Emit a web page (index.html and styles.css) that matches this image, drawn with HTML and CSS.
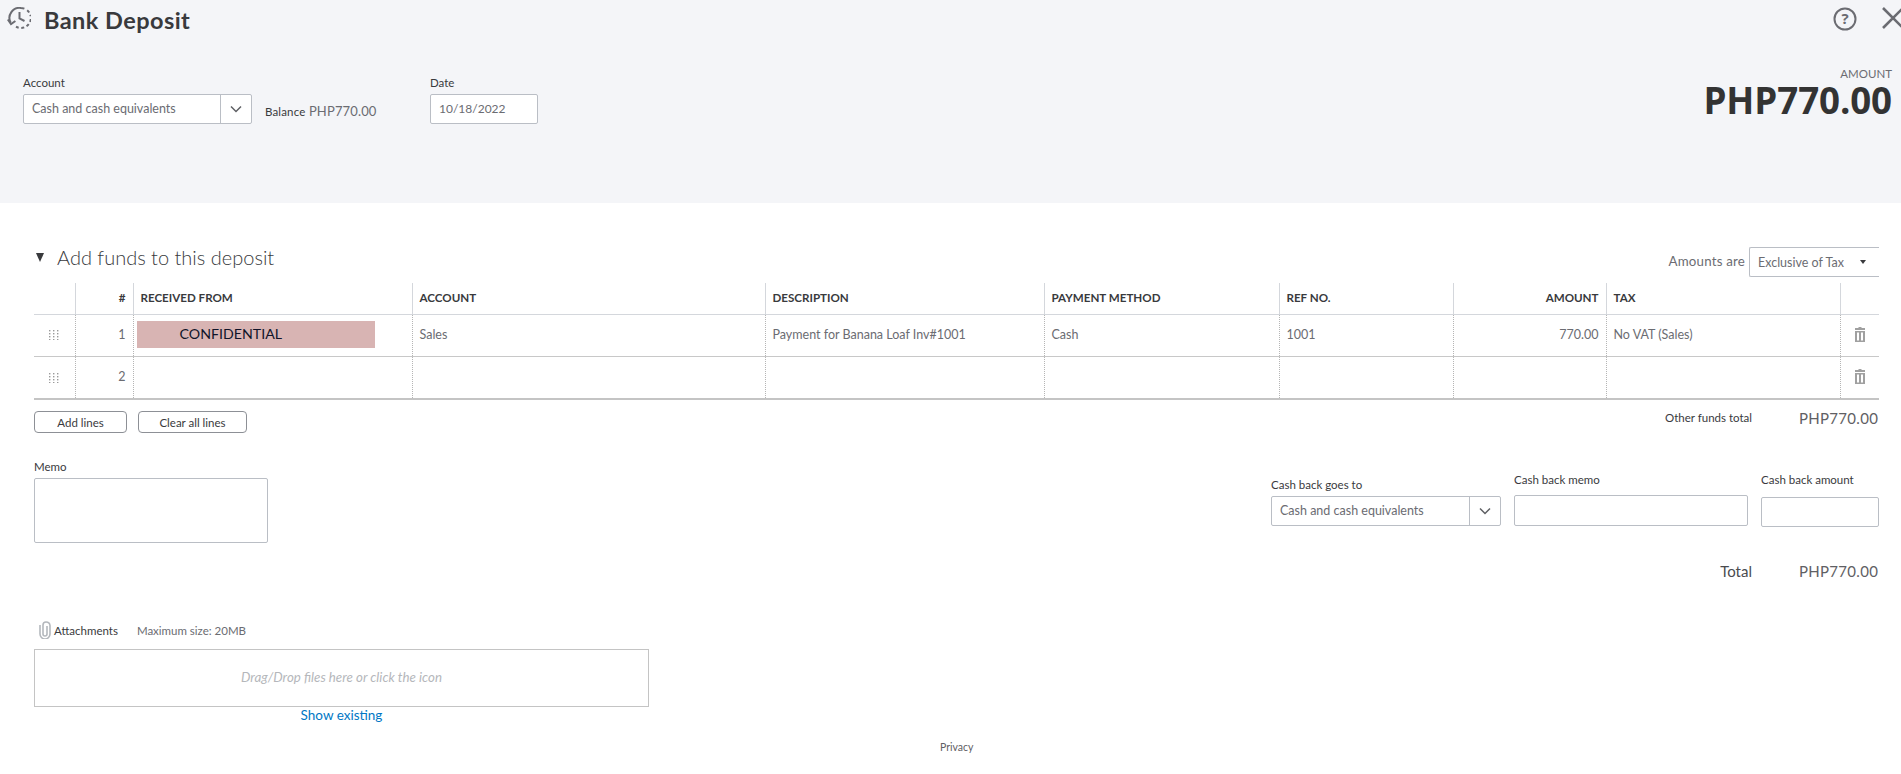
FILE: index.html
```html
<!DOCTYPE html>
<html lang="en">
<head>
<meta charset="utf-8">
<title>Bank Deposit</title>
<link rel="stylesheet" href="styles.css">
</head>
<body>
<svg class="sprites" width="0" height="0" aria-hidden="true">
  <symbol id="grip" viewBox="0 0 10 10"><g fill="#9a9a9a"><rect x="0" y="0" width="1.4" height="1.4"/><rect x="4" y="0" width="1.4" height="1.4"/><rect x="8" y="0" width="1.4" height="1.4"/><rect x="0" y="3" width="1.4" height="1.4"/><rect x="4" y="3" width="1.4" height="1.4"/><rect x="8" y="3" width="1.4" height="1.4"/><rect x="0" y="6" width="1.4" height="1.4"/><rect x="4" y="6" width="1.4" height="1.4"/><rect x="8" y="6" width="1.4" height="1.4"/><rect x="0" y="9" width="1.4" height="1"/><rect x="4" y="9" width="1.4" height="1"/><rect x="8" y="9" width="1.4" height="1"/></g></symbol>
  <symbol id="trash" viewBox="0 0 10 15"><path fill="#a0a0a0" d="M3.5 0h3v1H10v2H0V1h3.5zM0 4h10v11H0zm2 1.5v8h2v-8zm4 0v8h2v-8z"/></symbol>
  <symbol id="chev" viewBox="0 0 12 8"><path fill="none" stroke="#5f6064" stroke-width="1.5" d="M1 1.5l5 5 5-5"/></symbol>
</svg>

<header class="top">
  <div class="titlebar">
    <div class="title-group">
      <svg class="history" viewBox="0 0 24 22" width="24" height="22"><g fill="none" stroke="#6b6c72" stroke-width="2"><path d="M3.6 15.5A10 10 0 0 1 14 1a10 10 0 0 1 3.4.6"/><path d="M20.2 3.2a10 10 0 0 1 3.4 6" stroke-dasharray="3 2.6"/><path d="M23.8 12a10 10 0 0 1-9.8 9 10 10 0 0 1-5-1.4" stroke-dasharray="3 2.6"/><path d="M12.5 5v6.5l5 2.5"/><path d="M.8 12.5l3.2 4.5 4.4-3"/></g></svg>
      <h1 class="title">Bank Deposit</h1>
    </div>
    <div class="top-actions">
      <svg viewBox="0 0 24 24" width="24" height="24"><circle cx="12" cy="12" r="10.5" fill="none" stroke="#6b6c72" stroke-width="2"/><text x="12" y="17" text-anchor="middle" class="help-mark">?</text></svg>
      <svg class="close" viewBox="0 0 22 22" width="22" height="22"><path fill="none" stroke="#6b6c72" stroke-width="2.6" d="M1 1l20 20M21 1L1 21"/></svg>
    </div>
  </div>
  <div class="top-form">
    <div class="top-fields">
      <div class="field">
        <label class="label">Account</label>
        <div class="select w-account"><span class="select-text">Cash and cash equivalents</span><span class="select-btn"><svg width="12" height="8"><use href="#chev"/></svg></span></div>
      </div>
      <div class="balance"><span class="balance-label">Balance</span> PHP770.00</div>
      <div class="field">
        <label class="label">Date</label>
        <div class="input date">10/18/2022</div>
      </div>
    </div>
    <div class="amount-box">
      <div class="amount-label">AMOUNT</div>
      <div class="amount-value">PHP770.00</div>
    </div>
  </div>
</header>

<main class="main">
  <div class="section-head">
    <h2 class="section-title"><span class="tri"></span>Add funds to this deposit</h2>
    <div class="amounts-are"><span class="amounts-label">Amounts are</span><div class="tax-select">Exclusive of Tax<span class="tax-arrow"></span></div></div>
  </div>

  <table class="grid">
    <colgroup><col class="c1"><col class="c2"><col class="c3"><col class="c4"><col class="c5"><col class="c6"><col class="c7"><col class="c8"><col class="c9"><col class="c10"></colgroup>
    <thead>
      <tr><th></th><th class="num">#</th><th>RECEIVED FROM</th><th>ACCOUNT</th><th>DESCRIPTION</th><th>PAYMENT METHOD</th><th>REF NO.</th><th class="num">AMOUNT</th><th>TAX</th><th></th></tr>
    </thead>
    <tbody>
      <tr>
        <td class="ic"><svg width="10" height="10"><use href="#grip"/></svg></td>
        <td class="num">1</td>
        <td class="redact-cell"><div class="redact">CONFIDENTIAL</div></td>
        <td>Sales</td><td>Payment for Banana Loaf Inv#1001</td><td>Cash</td><td>1001</td><td class="num">770.00</td><td>No VAT (Sales)</td>
        <td class="ic"><svg width="10" height="15"><use href="#trash"/></svg></td>
      </tr>
      <tr class="last">
        <td class="ic"><svg width="10" height="10"><use href="#grip"/></svg></td>
        <td class="num">2</td><td></td><td></td><td></td><td></td><td></td><td></td><td></td>
        <td class="ic"><svg width="10" height="15"><use href="#trash"/></svg></td>
      </tr>
    </tbody>
  </table>

  <div class="table-foot">
    <div class="btns"><button class="btn btn-add">Add lines</button><button class="btn btn-clear">Clear all lines</button></div>
    <div class="sum"><span class="sum-label">Other funds total</span><span class="sum-value">PHP770.00</span></div>
  </div>

  <div class="lower">
    <div class="memo">
      <label class="label">Memo</label>
      <div class="memo-box"></div>
    </div>
    <div class="cash">
      <div class="field cash-to">
        <label class="label">Cash back goes to</label>
        <div class="select w-cash"><span class="select-text">Cash and cash equivalents</span><span class="select-btn"><svg width="12" height="8"><use href="#chev"/></svg></span></div>
      </div>
      <div class="field cash-memo">
        <label class="label">Cash back memo</label>
        <div class="input w-memo"></div>
      </div>
      <div class="field cash-amt">
        <label class="label">Cash back amount</label>
        <div class="input w-amt"></div>
      </div>
    </div>
  </div>

  <div class="total"><span class="total-label">Total</span><span class="sum-value">PHP770.00</span></div>

  <section class="attach">
    <div class="attach-head">
      <svg width="12" height="18" viewBox="0 0 12 18"><path fill="none" stroke="#b4b8bd" stroke-width="1.6" d="M8 5v8a2 2 0 0 1-4 0V4a3 3 0 0 1 3-3 4 4 0 0 1 4 3.5V13a5 5 0 0 1-10 0V4"/></svg>
      <span class="attach-title">Attachments</span>
      <span class="attach-max">Maximum size: 20MB</span>
    </div>
    <div class="drop">Drag/Drop files here or click the icon</div>
    <a class="show" href="#">Show existing</a>
  </section>
</main>
<footer class="privacy">Privacy</footer>
</body>
</html>
```
FILE: styles.css
```css
* { box-sizing: border-box; }
html, body { margin: 0; padding: 0; height: 774px; overflow: hidden; }
body { background: #fff; color: #393a3d; font-family: Lato, "Open Sans", sans-serif; font-size: 12.5px; }
.sprites { position: absolute; }

.top { height: 203px; background: #f4f5f8; overflow: hidden; }
.titlebar { display: flex; justify-content: space-between; height: 40px; padding: 7px 0 0 7px; }
.title-group { display: flex; align-items: flex-start; gap: 13px; }
.title { margin: -5px 0 0; font-size: 23.5px; line-height: 36px; font-weight: 700; color: #393a3d; letter-spacing: .45px; }
.top-actions { display: flex; align-items: flex-start; gap: 25px; margin-right: -3px; }
.help-mark { font: 700 15px "Open Sans", sans-serif; fill: #6b6c72; }

.top-form { display: flex; justify-content: space-between; padding: 0 9px 0 23px; }
.top-fields { display: flex; align-items: flex-start; padding-top: 36px; }
.label { display: block; font-size: 11.5px; line-height: 14px; color: #393a3d; margin-bottom: 4px; }
.select { display: flex; height: 30px; background: #fff; border: 1px solid #babec5; border-radius: 2px; }
.select-text { flex: 1; padding-left: 8px; line-height: 28px; font-size: 12.5px; color: #6b6c72; }
.select-btn { width: 31px; border-left: 1px solid #babec5; display: flex; align-items: center; justify-content: center; }
.w-account { width: 229px; }
.w-cash { width: 230px; }
.balance { margin: 26px 0 0 13px; width: 165px; font-size: 13px; line-height: 18px; color: #6b6c72; letter-spacing: .15px; }
.balance-label { font-size: 11.5px; color: #393a3d; }
.input { height: 30px; background: #fff; border: 1px solid #babec5; border-radius: 2px; padding-left: 8px; line-height: 27px; font-size: 12px; color: #6b6c72; }
.date { width: 108px; }
.amount-box { text-align: right; padding-top: 27px; }
.amount-label { font-size: 11.5px; line-height: 14px; color: #6b6c72; }
.amount-value { font: 700 36.7px/38px "Open Sans", sans-serif; color: #333; letter-spacing: -.1px; }

.main { padding: 0 22px 0 34px; }
.section-head { display: flex; justify-content: space-between; height: 80px; }
.section-title { margin: 42px 0 0; height: 24px; display: flex; align-items: center; font-size: 20px; line-height: 24px; font-weight: 300; color: #393a3d; }
.tri { width: 0; height: 0; border: 4.5px solid transparent; border-top: 9px solid #393a3d; border-bottom: 0; margin: 1px 13px 0 2px; }
.amounts-are { display: flex; align-items: flex-start; margin-top: 44px; }
.amounts-label { font-size: 13.3px; line-height: 28px; color: #6b6c72; margin-right: 4px; letter-spacing: .2px; }
.tax-select { position: relative; width: 130px; height: 30px; border: 1px solid #babec5; border-right: 0; border-radius: 2px 0 0 2px; padding-left: 8px; line-height: 30px; font-size: 12.5px; color: #6b6c72; }
.tax-arrow { position: absolute; right: 13px; top: 12px; border: 3.5px solid transparent; border-top: 4px solid #393a3d; border-bottom: 0; }

.grid { width: 1845px; table-layout: fixed; border-collapse: collapse; }
.c1 { width: 41px; } .c2 { width: 58px; } .c3 { width: 279px; } .c4 { width: 353px; } .c5 { width: 279px; }
.c6 { width: 235px; } .c7 { width: 174px; } .c8 { width: 153px; } .c9 { width: 234px; } .c10 { width: 39px; }
.grid th { height: 31px; padding: 0 7px 2px; text-align: left; font-size: 11.6px; font-weight: 700; color: #393a3d; border-right: 1px solid #d4d7dc; border-bottom: 1px solid #d4d7dc; }
.grid th:last-child, .grid td:last-child { border-right: 0; }
.grid td { height: 42px; padding: 0 7px 2px; font-size: 12.5px; color: #6b6c72; border-right: 1px dotted #b5b5b5; border-bottom: 1px solid #c8c8c8; }
.grid .last td { height: 43px; border-bottom: 2px solid #c4c4c4; }
.grid .num { text-align: right; }
.grid .ic { padding: 0 0 2px; text-align: center; }
.grid .ic svg { display: inline-block; vertical-align: middle; }
.grid .redact-cell { padding: 0 3px 2px; }
.redact { width: 238px; height: 27px; background: #d8b4b3; padding-left: 43px; font-size: 14.2px; line-height: 26px; color: #10142a; }

.table-foot { display: flex; justify-content: space-between; margin-top: 11px; height: 22px; }
.btns { display: flex; gap: 11px; }
.btn { height: 22px; padding: 0; background: #fff; border: 1px solid #8d9096; border-radius: 4px; font: 400 11.5px Lato, sans-serif; color: #393a3d; }
.btn-add { width: 93px; }
.btn-clear { width: 109px; }
.sum { display: flex; align-items: center; margin-top: -9px; }
.sum-label { font-size: 11.5px; color: #393a3d; margin-right: 47px; }
.sum-value { font-size: 15px; color: #5f6064; letter-spacing: .3px; width: 79px; margin-right: 1px; text-align: right; white-space: nowrap; }

.lower { display: flex; justify-content: space-between; margin-top: 27px; }
.memo-box { width: 234px; height: 65px; border: 1px solid #babec5; border-radius: 2px; }
.cash { display: flex; align-items: flex-start; }
.cash-to { padding-top: 18px; }
.cash-memo { padding-top: 13px; margin-left: 13px; }
.cash-memo .label { margin-bottom: 8px; }
.cash-amt { padding-top: 13px; margin-left: 13px; }
.cash-amt .label { margin-bottom: 10px; }
.w-memo { width: 234px; height: 31px; }
.w-amt { width: 118px; height: 30px; }

.total { display: flex; justify-content: flex-end; align-items: center; margin-top: 16px; height: 24px; }
.total-label { font-size: 15px; font-weight: 400; color: #4a4b4f; margin-right: 47px; }

.attach { margin-top: 36px; }
.attach-head { display: flex; align-items: center; height: 22px; padding-left: 5px; }
.attach-title { margin-left: 3px; font-size: 11.5px; color: #393a3d; }
.attach-max { margin-left: 19px; font-size: 11.5px; color: #6b6c72; }
.drop { width: 615px; height: 58px; margin-top: 8px; border: 1px solid #c4c4c4; text-align: center; line-height: 54px; font-style: italic; font-size: 13.3px; color: #b5b7bb; }
.show { display: block; width: 615px; text-align: center; margin-top: 0; font-size: 13.5px; line-height: 17px; color: #0077c5; text-decoration: none; }

.privacy { position: absolute; left: 940px; top: 741px; font-size: 10.5px; line-height: 13px; color: #5f6064; }
```
